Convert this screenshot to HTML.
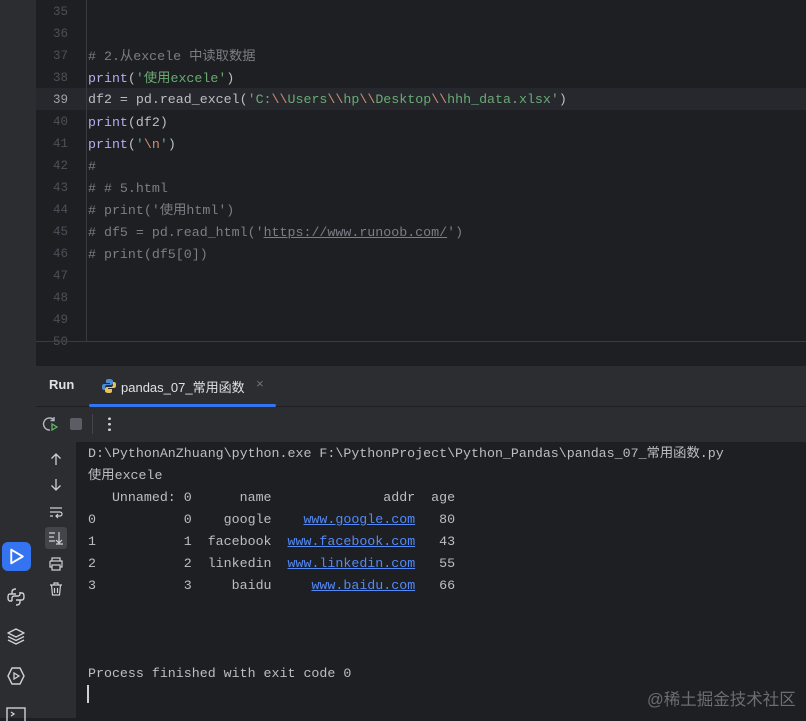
<!DOCTYPE html>
<html><head><meta charset="utf-8"><style>
*{margin:0;padding:0;box-sizing:border-box}
body{width:806px;height:718px;background:#1e1f22;position:relative;overflow:hidden;font-family:"Liberation Mono","Noto Sans CJK SC",monospace;font-size:13px;color:#bcbec4}
.abs{position:absolute}
.ln{position:absolute;left:36px;width:32px;text-align:right;color:#4b5059;font-size:12.5px;line-height:22px}
.cl{position:absolute;left:88px;white-space:pre;line-height:22px;height:22px;font-size:13.3px}
.cm{color:#7a7e85}.st{color:#6aab73}.kw{color:#b3aef0}.esc{color:#cf8e6d}
.u{text-decoration:underline}
.lk{color:#548af7;text-decoration:underline}
.out{position:absolute;left:88px;white-space:pre;color:#bcbec4;line-height:22px;height:22px;font-size:13.3px}
svg{position:absolute}
</style></head><body>
<div class="abs" style="left:0;top:0;width:36px;height:718px;background:#2b2d30"></div>
<div class="abs" style="left:36px;top:88px;width:770px;height:22px;background:#26282e"></div>
<div class="abs" style="left:86px;top:0;width:1px;height:341px;background:#393b40"></div>
<div class="ln" style="top:1px">35</div><div class="ln" style="top:23px">36</div><div class="ln" style="top:45px">37</div><div class="ln" style="top:67px">38</div><div class="ln" style="top:89px;color:#a1a3ab">39</div><div class="ln" style="top:111px">40</div><div class="ln" style="top:133px">41</div><div class="ln" style="top:155px">42</div><div class="ln" style="top:177px">43</div><div class="ln" style="top:199px">44</div><div class="ln" style="top:221px">45</div><div class="ln" style="top:243px">46</div><div class="ln" style="top:265px">47</div><div class="ln" style="top:287px">48</div><div class="ln" style="top:309px">49</div><div class="ln" style="top:331px">50</div>
<div class="cl cm" style="top:46px"># 2.从excele 中读取数据</div>
<div class="cl" style="top:68px"><span class="kw">print</span>(<span class="st">'使用excele'</span>)</div>
<div class="cl" style="top:89px">df2 = pd.read_excel(<span class="st">'C:<span class="esc">\\</span>Users<span class="esc">\\</span>hp<span class="esc">\\</span>Desktop<span class="esc">\\</span>hhh_data.xlsx'</span>)</div>
<div class="cl" style="top:112px"><span class="kw">print</span>(df2)</div>
<div class="cl" style="top:134px"><span class="kw">print</span>(<span class="st">'<span class="esc">\n</span>'</span>)</div>
<div class="cl cm" style="top:156px">#</div>
<div class="cl cm" style="top:178px"># # 5.html</div>
<div class="cl cm" style="top:200px"># print('使用html')</div>
<div class="cl cm" style="top:222px"># df5 = pd.read_html('<span class="u">https://www.runoob.com/</span>')</div>
<div class="cl cm" style="top:244px"># print(df5[0])</div>
<div class="abs" style="left:36px;top:341px;width:770px;height:1px;background:#393b40"></div>
<div class="abs" style="left:36px;top:366px;width:770px;height:76px;background:#2b2d30"></div>
<div class="abs" style="left:36px;top:406px;width:770px;height:1px;background:#1e1f22"></div>
<div class="abs" style="left:36px;top:442px;width:40px;height:276px;background:#2b2d30"></div>
<div class="abs" style="left:49px;top:377px;font-family:'Liberation Sans',sans-serif;font-weight:bold;font-size:13px;color:#dfe1e5">Run</div>
<svg style="left:101px;top:378px" width="16" height="16" viewBox="0 0 16 16"><path d="M8 1c-3 0-3 1-3 2v2h4v1H3c-2 0-2 2-2 3s0 3 2 3h1V9c0-1 1-2 2-2h4c1 0 2-1 2-2V3c0-1-1-2-4-2z" fill="#4a8cd6"/><path d="M8 15c3 0 3-1 3-2v-2H7v-1h6c2 0 2-2 2-3s0-3-2-3h-1v3c0 1-1 2-2 2H6c-1 0-2 1-2 2v2c0 1 1 2 4 2z" fill="#e6c25a"/></svg>
<div class="abs" style="left:121px;top:377px;font-family:'Liberation Sans','Noto Sans CJK SC',sans-serif;font-size:13px;color:#dfe1e5">pandas_07_常用函数</div>
<div class="abs" style="left:256px;top:377px;color:#6f737a;font-size:13px">×</div>
<div class="abs" style="left:89px;top:404px;width:187px;height:3px;background:#3574f0;border-radius:2px"></div>
<svg style="left:42px;top:416px" width="16" height="16" viewBox="0 0 16 16"><path d="M12 4A6 6 0 1 0 8 14" stroke="#b4b8bf" stroke-width="1.4" fill="none"/><path d="M10 8v6l5-3z" fill="none" stroke="#5fb865" stroke-width="1.3"/><path d="M12 1v3.5H8.5" stroke="#b4b8bf" stroke-width="1.4" fill="none"/></svg>
<div class="abs" style="left:70px;top:418px;width:12px;height:12px;background:#5a5d63;border-radius:2px"></div>
<div class="abs" style="left:92px;top:414px;width:1px;height:20px;background:#43454a"></div>
<div class="abs" style="left:108px;top:416px;width:3px;height:16px;background:radial-gradient(circle,#ced0d6 1.3px,transparent 1.5px) 0 0/3px 5.5px"></div>
<svg style="left:48px;top:451px" width="16" height="16" viewBox="0 0 16 16"><path d="M8 14V3M3.5 7.5L8 3l4.5 4.5" stroke="#ced0d6" stroke-width="1.3" fill="none"/></svg>
<svg style="left:48px;top:477px" width="16" height="16" viewBox="0 0 16 16"><path d="M8 2v11M3.5 8.5L8 13l4.5-4.5" stroke="#ced0d6" stroke-width="1.3" fill="none"/></svg>
<svg style="left:48px;top:505px" width="16" height="16" viewBox="0 0 16 16"><path d="M2 3h12M2 7h10a2 2 0 0 1 0 4H8M10 9l-2 2 2 2M2 11h3" stroke="#ced0d6" stroke-width="1.2" fill="none"/></svg>
<div class="abs" style="left:45px;top:527px;width:22px;height:22px;background:#43454a;border-radius:3px"></div>
<svg style="left:48px;top:530px" width="16" height="16" viewBox="0 0 16 16"><path d="M1 3h6M1 7h5M1 11h6M11 2v11M8 10l3 3 3-3M8 14h7" stroke="#ced0d6" stroke-width="1.2" fill="none"/></svg>
<svg style="left:48px;top:556px" width="16" height="16" viewBox="0 0 16 16"><path d="M4 5V2h8v3M2 5h12v6h-2M4 11H2V5M4 9h8v5H4z" stroke="#ced0d6" stroke-width="1.2" fill="none"/></svg>
<svg style="left:48px;top:581px" width="16" height="16" viewBox="0 0 16 16"><path d="M2 4h12M6 4V2h4v2M3.5 4l1 10h7l1-10M6.5 7v5M9.5 7v5" stroke="#ced0d6" stroke-width="1.2" fill="none"/></svg>
<div class="abs" style="left:2px;top:542px;width:29px;height:29px;background:#3574f0;border-radius:6px"></div>
<svg style="left:6px;top:546px" width="21" height="21" viewBox="0 0 20 20"><path d="M5 3.5v13l11-6.5z" stroke="#fff" stroke-width="1.8" fill="none" stroke-linejoin="round"/></svg>
<svg style="left:6px;top:587px" width="20" height="20" viewBox="0 0 20 20"><path d="M10 2c-3 0-4 1-4 3v2h4M6 7H4c-2 0-2 2-2 3.5S2 14 4 14h2M10 18c3 0 4-1 4-3v-2h-4M14 13h2c2 0 2-2 2-3.5S18 6 16 6h-2M6 14v-3c0-1 1-2 2-2h4c1 0 2-1 2-2V5" stroke="#ced0d6" stroke-width="1.4" fill="none"/></svg>
<svg style="left:6px;top:626px" width="20" height="20" viewBox="0 0 20 20"><path d="M10 3l8 4-8 4-8-4zM2 10.5l8 4 8-4M2 14l8 4 8-4" stroke="#ced0d6" stroke-width="1.4" fill="none" stroke-linejoin="round"/></svg>
<svg style="left:6px;top:666px" width="20" height="20" viewBox="0 0 20 20"><path d="M6 2h8l4 8-4 8H6l-4-8z" stroke="#ced0d6" stroke-width="1.4" fill="none" stroke-linejoin="round"/><path d="M8 7v6l5-3z" stroke="#ced0d6" stroke-width="1.3" fill="none"/></svg>
<svg style="left:6px;top:707px" width="20" height="14" viewBox="0 0 20 14"><rect x="1" y="1" width="18" height="14" stroke="#ced0d6" stroke-width="1.4" fill="none"/><path d="M5 5l3 2-3 2" stroke="#ced0d6" stroke-width="1.3" fill="none"/></svg>
<div class="out" style="top:443px">D:\PythonAnZhuang\python.exe F:\PythonProject\Python_Pandas\pandas_07_常用函数.py</div>
<div class="out" style="top:465px">使用excele</div>
<div class="out" style="top:487px">   Unnamed: 0      name              addr  age</div>
<div class="out" style="top:509px">0           0    google    <span class="lk">www.google.com</span>   80</div>
<div class="out" style="top:531px">1           1  facebook  <span class="lk">www.facebook.com</span>   43</div>
<div class="out" style="top:553px">2           2  linkedin  <span class="lk">www.linkedin.com</span>   55</div>
<div class="out" style="top:575px">3           3     baidu     <span class="lk">www.baidu.com</span>   66</div>
<div class="out" style="top:663px">Process finished with exit code 0</div>
<div class="abs" style="left:87px;top:685px;width:2px;height:18px;background:#ced0d6"></div>
<div class="abs" style="left:647px;top:686px;font-family:'Liberation Sans','Noto Sans CJK SC',sans-serif;font-size:16.5px;color:#6a6d72">@稀土掘金技术社区</div>
</body></html>
